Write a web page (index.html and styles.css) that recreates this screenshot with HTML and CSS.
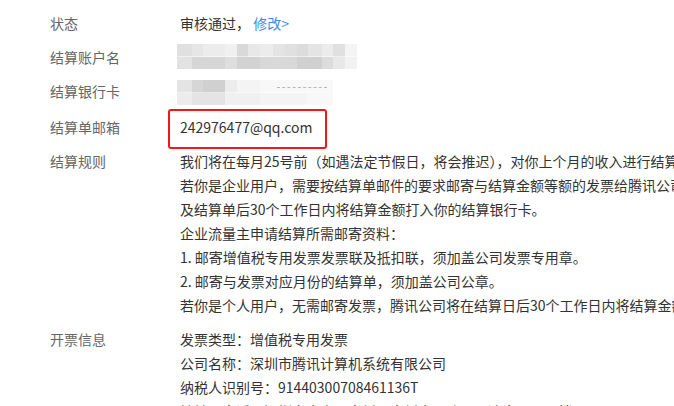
FILE: index.html
```html
<!DOCTYPE html>
<html lang="zh-CN">
<head>
<meta charset="utf-8">
<title>结算信息</title>
<link rel="stylesheet" href="styles.css">
</head>
<body>
<div class="info">
  <div class="row">
    <div class="label">状态</div>
    <div class="value">审核通过， <a class="link" href="#">修改&gt;</a></div>
  </div>
  <div class="row">
    <div class="label">结算账户名</div>
    <div class="value"><div class="mosaic mosaic-name"></div></div>
  </div>
  <div class="row">
    <div class="label">结算银行卡</div>
    <div class="value"><div class="mosaic mosaic-card"><span class="ghost"></span></div></div>
  </div>
  <div class="row">
    <div class="label">结算单邮箱</div>
    <div class="value"><span class="email">242976477@qq.com<span class="mark"></span></span></div>
  </div>
  <div class="row">
    <div class="label">结算规则</div>
    <div class="value">
      <p>我们将在每月25号前（如遇法定节假日，将会推迟），对你上个月的收入进行结算。</p>
      <p>若你是企业用户，需要按结算单邮件的要求邮寄与结算金额等额的发票给腾讯公司，腾讯公司将在收到发票</p>
      <p>及结算单后30个工作日内将结算金额打入你的结算银行卡。</p>
      <p>企业流量主申请结算所需邮寄资料：</p>
      <p>1. 邮寄增值税专用发票发票联及抵扣联，须加盖公司发票专用章。</p>
      <p>2. 邮寄与发票对应月份的结算单，须加盖公司公章。</p>
      <p>若你是个人用户，无需邮寄发票，腾讯公司将在结算日后30个工作日内将结算金额打入你的结算银行卡。</p>
    </div>
  </div>
  <div class="row">
    <div class="label">开票信息</div>
    <div class="value">
      <p>发票类型：增值税专用发票</p>
      <p>公司名称：深圳市腾讯计算机系统有限公司</p>
      <p>纳税人识别号：91440300708461136T</p>
      <p>地址、电话：深圳市南山区高新区高新南一路飞亚达大厦5-10楼0755-86013388</p>
    </div>
  </div>
</div>
</body>
</html>
```
FILE: styles.css
```css
html, body {
  margin: 0;
  padding: 0;
  overflow: hidden;
  background: #fff;
}
body {
  font-family: "Microsoft YaHei", "Noto Sans CJK SC", sans-serif;
  font-size: 14px;
  line-height: 24px;
  color: #333;
}
.info {
  padding: 11px 0 0 50px;
}
.row {
  display: flex;
  margin-bottom: 10px;
}
.label {
  width: 130px;
  flex-shrink: 0;
  color: #666;
  white-space: nowrap;
}
.value {
  color: #333;
  white-space: nowrap;
}
.value p {
  margin: 0;
}
.link {
  color: #3b8ced;
  text-decoration: none;
}
.mosaic {
  position: relative;
  height: 25px;
  margin-left: -3px;
  background-repeat: no-repeat;
  background-size: 100% 50%, 100% 50%;
  background-position: top left, bottom left;
}
.mosaic-name {
  width: 180px;
  margin-top: -1px;
  background-image:
    linear-gradient(to right,
      #e0e0e0 0 15px, #e6e6e6 15px 26px, #ececec 26px 48px, #f0f0f0 48px 60px,
      #d9d9d9 60px 71px, #e8e8e8 71px 83px, #ececec 83px 96px, #e4e4e4 96px 108px,
      #e0e0e0 108px 120px, #dcdcdc 120px 131px, #e4e4e4 131px 145px, #ececec 145px 156px,
      #e0e0e0 156px 168px, #f4f4f4 168px 180px),
    linear-gradient(to right,
      #e2e2e2 0 15px, #d6d6d6 15px 48px, #dedede 48px 60px, #d2d2d2 60px 83px,
      #d8d8d8 83px 120px, #d0d0d0 120px 145px, #dcdcdc 145px 156px, #e8e8e8 156px 168px,
      #f2f2f2 168px 180px);
}
.mosaic-card {
  width: 156px;
  margin-top: 1px;
  background-image:
    linear-gradient(to right,
      #e4e4e4 0 15px, #d6d6d6 15px 26px, #d0d0d0 26px 48px, #ececec 48px 60px,
      #f4f4f4 60px 83px, #f8f8f8 83px 156px),
    linear-gradient(to right,
      #ececec 0 15px, #e4e4e4 15px 48px, #f0f0f0 48px 83px, #f4f4f4 83px 130px,
      #f8f8f8 130px 156px);
}
.ghost {
  position: absolute;
  left: 100px;
  top: 7px;
  width: 50px;
  border-top: 1px dashed #b8b8b8;
}
.email {
  position: relative;
  display: inline-block;
}
.mark {
  position: absolute;
  left: -12px;
  top: -6px;
  width: 159px;
  height: 40px;
  box-sizing: border-box;
  border: 2px solid #f5161a;
  border-radius: 3px;
}
```
